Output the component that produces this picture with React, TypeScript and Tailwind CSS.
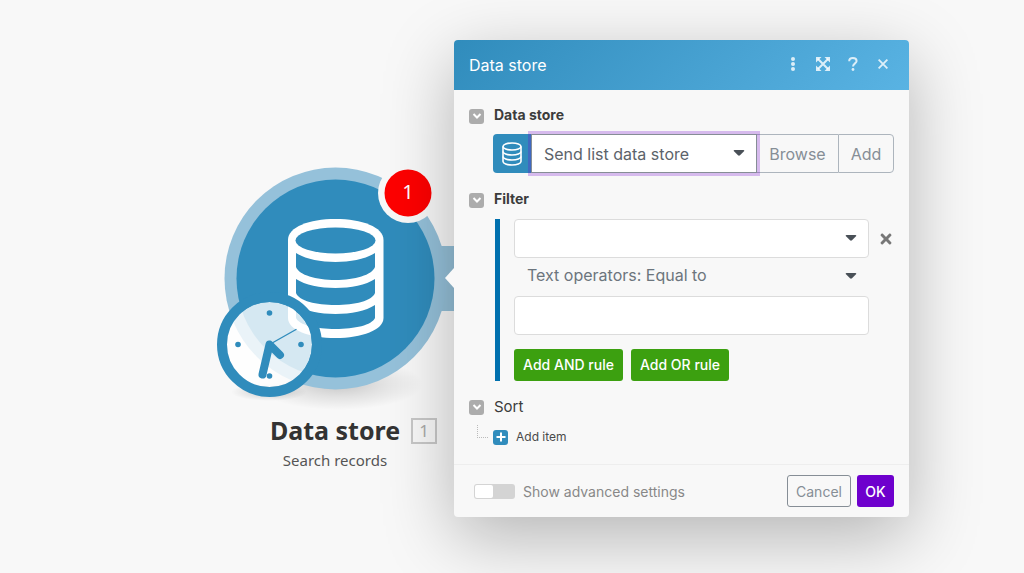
import { useState, type ReactNode } from "react";
import { FaTimes } from "react-icons/fa";

function DataStoreModule() {
  return (
    <svg viewBox="0 0 240 250" className="block w-[240px] h-[250px]" aria-hidden="true">
      <defs>
        <radialGradient id="floor-shadow">
          <stop offset="0" stopColor="#000" stopOpacity="0.2" />
          <stop offset="0.5" stopColor="#000" stopOpacity="0.09" />
          <stop offset="1" stopColor="#000" stopOpacity="0" />
        </radialGradient>
      </defs>

      {/* shadows on the floor */}
      <ellipse cx="124" cy="224" rx="84" ry="26" fill="url(#floor-shadow)" />
      <ellipse cx="54" cy="232" rx="38" ry="9" fill="url(#floor-shadow)" />

      {/* module body and connector */}
      <path d="M222 86H240V151H222Z" fill="#95c0d8" />
      <circle cx="120.500" cy="118.500" r="111" fill="#95c1da" />
      <circle cx="120.500" cy="118.500" r="99" fill="#308cbc" />

      {/* database */}
      <path
        d="M73 80C73 67 94 59 120.500 59S168.500 67 168.500 80V158C168.500 170 147 178 120.500 178S73 170 73 158Z"
        fill="#fff"
      />
      <ellipse cx="120.500" cy="80.500" rx="40" ry="13" fill="#308cbc" />
      <path d="M81 93C90 99 105 102 120.500 102S151 99 160 93V107C157 115 140 120 120.500 120S84 115 81 107Z" fill="#308cbc" />
      <path d="M81 119C90 125 105 128 120.500 128S151 125 160 119V133C157 141 140 145 120.500 145S84 141 81 133Z" fill="#308cbc" />
      <path d="M81 145C90 151 105 154 120.500 154S151 151 160 145V158C157 165 140 169 120.500 169S84 165 81 158Z" fill="#308cbc" />

      {/* clock */}
      <circle cx="54.500" cy="184.500" r="42.500" fill="#fff" fillOpacity="0.8" />
      <circle cx="54.500" cy="184.500" r="47.500" fill="none" stroke="#308cbc" strokeWidth="10" />
      <g fill="#308cbc">
        <circle cx="54.500" cy="153" r="2.800" />
        <circle cx="86" cy="184.500" r="2.800" />
        <circle cx="23" cy="184.500" r="2.800" />
        <circle cx="54.500" cy="216" r="2.800" />
      </g>
      <g stroke="#308cbc" strokeLinecap="round" strokeLinejoin="round" fill="none">
        <path d="M54.500 184.500L81 169.500" strokeWidth="1.400" />
        <path d="M47.500 214.500L54.500 184.500L65 195" strokeWidth="8" />
      </g>

      {/* error count */}
      <circle cx="193" cy="33" r="30" fill="#f8f8f8" />
      <circle cx="193" cy="33" r="23.500" fill="#fe0000" />
    </svg>
  );
}

function DatabaseIcon() {
  return (
    <svg viewBox="0 0 20 24" className="w-5 h-6" fill="none" stroke="#fff" strokeWidth="1.600" aria-hidden="true">
      <ellipse cx="10" cy="4.500" rx="9" ry="3.500" />
      <path d="M1 4.500V19.500C1 21.500 5 23 10 23S19 21.500 19 19.500V4.500" />
      <path d="M1 9.500C1 11.500 5 13 10 13S19 11.500 19 9.500" />
      <path d="M1 14.500C1 16.500 5 18 10 18S19 16.500 19 14.500" />
    </svg>
  );
}

function Caret() {
  return (
    <svg
      viewBox="0 0 12 8"
      className="pointer-events-none absolute right-3 top-1/2 -mt-1 w-3 h-2"
      fill="#495057"
      aria-hidden="true"
    >
      <path d="M1.500 0H10.500C11.300 0 11.600.8 11 1.300L7 5.300C6.400 5.900 5.600 5.900 5 5.300L1 1.300C.4.8.7 0 1.500 0Z" />
    </svg>
  );
}

function HeaderButton({ label, children }: { label: string; children: ReactNode }) {
  return (
    <button type="button" aria-label={label} className="flex items-center justify-center w-[30px] h-[30px]">
      {children}
    </button>
  );
}

function SectionTitle({ children, bold = true }: { children: ReactNode; bold?: boolean }) {
  return (
    <h2 className="flex items-center gap-[10px] h-5 text-[#3c3c3c]">
      <button
        type="button"
        aria-label="Toggle section"
        className="flex items-center justify-center w-[15px] h-[15px] rounded-[3px] bg-[#acacac] text-white"
      >
        <svg viewBox="0 0 10 8" className="w-[10px] h-2" fill="none" stroke="currentColor" strokeWidth="2">
          <path d="M1.500 2L5 5.500L8.500 2" />
        </svg>
      </button>
      <span className={bold ? "text-[14px] leading-4 pb-[2px] font-bold" : "text-[15px]"}>{children}</span>
    </h2>
  );
}

export default function App() {
  const [advanced, setAdvanced] = useState(false);
  const [value, setValue] = useState("");

  return (
    <main className="relative min-h-screen overflow-hidden bg-[#f8f8f8] font-['Inter',sans-serif]">
      {/* Module on the canvas */}
      <section className="absolute left-[215px] top-[160px] w-[240px]">
        <DataStoreModule />
        <span className="absolute left-[170px] top-[9px] w-[46px] h-[46px] flex items-center justify-center text-xl text-white font-['Noto_Sans',sans-serif]">
          1
        </span>
        <div className="relative flex flex-col items-center font-['Noto_Sans',sans-serif]">
          <h1 className="h-10 leading-10 text-[25px] font-bold text-[#333]">Data store</h1>
          <span className="absolute right-[18px] top-2 flex items-center justify-center w-[26px] h-[26px] border-2 border-[#c8c8c8] text-[17px] text-[#aaa]">
            1
          </span>
          <p className="h-5 leading-5 text-[15px] text-[#555]">Search records</p>
        </div>
      </section>

      {/* Settings panel */}
      <form
        onSubmit={(e) => e.preventDefault()}
        className="absolute left-[454px] top-10 w-[455px] rounded bg-[#f8f8f8] shadow-[0_20px_70px_rgba(0,0,0,0.28)]"
      >
        <svg viewBox="0 0 9 20" className="absolute -left-[9px] top-[228px] w-[9px] h-5" aria-hidden="true">
          <path d="M9 0V20L0 10Z" fill="#f8f8f8" />
        </svg>

        <header className="flex items-center justify-between h-[50px] pl-[15px] pr-[11px] rounded-t bg-linear-135 from-[#308cbc] to-[#59b3e3] text-white">
          <h2 className="text-[16px]">Data store</h2>
          <div className="flex pb-[2px] text-white/80">
            <HeaderButton label="More">
              <svg viewBox="0 0 4 14" className="w-1 h-[14px]" fill="currentColor">
                <circle cx="2" cy="2" r="2" />
                <circle cx="2" cy="7" r="2" />
                <circle cx="2" cy="12" r="2" />
              </svg>
            </HeaderButton>
            <HeaderButton label="Expand">
              <svg viewBox="0 0 14 14" className="w-[14px] h-[14px]" fill="currentColor">
                <path d="M0 0H5.500L0 5.500ZM14 0V5.500L8.500 0ZM0 14V8.500L5.500 14ZM14 14H8.500L14 8.500Z" />
                <path d="M2 2L12 12M12 2L2 12" stroke="currentColor" strokeWidth="2" />
              </svg>
            </HeaderButton>
            <HeaderButton label="Help">
              <svg viewBox="0 0 10 14" className="w-[10px] h-[14px]" fill="none" stroke="currentColor" strokeWidth="2">
                <path d="M1.200 4.200C1.200 2.200 2.800 1.100 4.900 1.100S8.600 2.200 8.600 4C8.600 6.500 5 6.300 5 9.600" />
                <circle cx="5" cy="12.500" r="1.400" fill="currentColor" stroke="none" />
              </svg>
            </HeaderButton>
            <HeaderButton label="Close">
              <svg viewBox="0 0 10 10" className="w-[10px] h-[10px]" stroke="currentColor" strokeWidth="1.800">
                <path d="M.6.6L9.400 9.400M9.400.6L.6 9.400" />
              </svg>
            </HeaderButton>
          </div>
        </header>

        <div className="px-[15px] pt-4 pb-[15px]">
          <SectionTitle>Data store</SectionTitle>
          <div className="flex h-[39px] mt-2 ml-6 text-[16px] text-[#868e96]">
            <span className="flex items-center justify-center w-[38px] rounded-l bg-[#308cbc]">
              <DatabaseIcon />
            </span>
            <div className="relative flex-1">
              <select
                aria-label="Data store"
                className="w-full h-full pl-3 pr-8 appearance-none bg-white border border-[#868e96] text-[#5c636a] outline-none shadow-[0_0_0_3px_rgba(110,0,205,0.25)]"
              >
                <option>Send list data store</option>
              </select>
              <Caret />
            </div>
            <button type="button" className="w-[81px] border-y border-[#adb5bd]">
              Browse
            </button>
            <button type="button" className="w-14 border border-[#adb5bd] rounded-r">
              Add
            </button>
          </div>

          <div className="mt-[17px]">
            <SectionTitle>Filter</SectionTitle>
          </div>
          <div className="mt-[9px] ml-[26px] pl-[14px] border-l-[5px] border-[#0070ae] text-[16px] text-[#6c757d]">
            <div className="flex items-center">
              <div className="relative flex-1">
                <select
                  aria-label="Filter field"
                  className="block w-full h-[39px] pl-3 appearance-none bg-white border border-[#dcdcdc] rounded"
                >
                  <option></option>
                </select>
                <Caret />
              </div>
              <button type="button" aria-label="Remove rule" className="flex justify-end w-[25px] text-[#777]">
                <FaTimes size={16} />
              </button>
            </div>
            <div className="relative mr-[25px]">
              <select aria-label="Operator" className="block w-full h-[38px] pl-[13px] pb-1 appearance-none bg-transparent">
                <option>Text operators: Equal to</option>
              </select>
              <Caret />
            </div>
            <div className="mr-[25px]">
              <input
                aria-label="Filter value"
                value={value}
                onChange={(e) => setValue(e.target.value)}
                className="block w-full h-[39px] px-3 bg-white border border-[#dcdcdc] rounded"
              />
            </div>
            <div className="flex gap-2 mt-[14px] text-[14px] font-medium text-white">
              <button type="button" className="h-8 w-[109px] pb-[2px] rounded-[3px] bg-[#3ca010]">
                Add AND rule
              </button>
              <button type="button" className="h-8 w-[98px] pb-[2px] rounded-[3px] bg-[#3ca010]">
                Add OR rule
              </button>
            </div>
          </div>

          <div className="mt-4">
            <SectionTitle bold={false}>Sort</SectionTitle>
          </div>
          <div className="flex items-center mt-2 ml-2 h-6">
            <span className="self-start w-[11px] h-[13px] border-l border-b border-dotted border-[#bbb]" />
            <button type="button" className="flex items-center gap-2 ml-[5px] text-[12px] text-[#4a4a4a]">
              <span className="flex items-center justify-center w-[15px] h-[15px] rounded-[3px] bg-[#308cbc] text-white">
                <svg viewBox="0 0 10 10" className="w-[10px] h-[10px]" stroke="currentColor" strokeWidth="2">
                  <path d="M5 .5V9.500M.5 5H9.500" />
                </svg>
              </span>
              Add item
            </button>
          </div>
        </div>

        <footer className="flex items-center justify-between h-[53px] pl-5 pr-[15px] border-t border-[#eee] text-[14px]">
          <label className="flex items-center gap-2 text-[#888]">
            <input
              type="checkbox"
              role="switch"
              checked={advanced}
              onChange={(e) => setAdvanced(e.target.checked)}
              className="appearance-none w-[41px] h-[15px] p-px rounded-[3px] bg-[#d4d4d4] before:block before:w-[18px] before:h-[13px] before:rounded-[2px] before:bg-white checked:bg-[#6e00cd] checked:before:ml-[21px]"
            />
            Show advanced settings
          </label>
          <div className="flex gap-[6px]">
            <button type="button" className="h-8 w-16 border border-[#868e96] rounded-[3px] text-[#868e96]">
              Cancel
            </button>
            <button type="submit" className="h-8 w-[37px] rounded-[3px] bg-[#6e00cd] text-white font-medium">
              OK
            </button>
          </div>
        </footer>
      </form>
    </main>
  );
}
